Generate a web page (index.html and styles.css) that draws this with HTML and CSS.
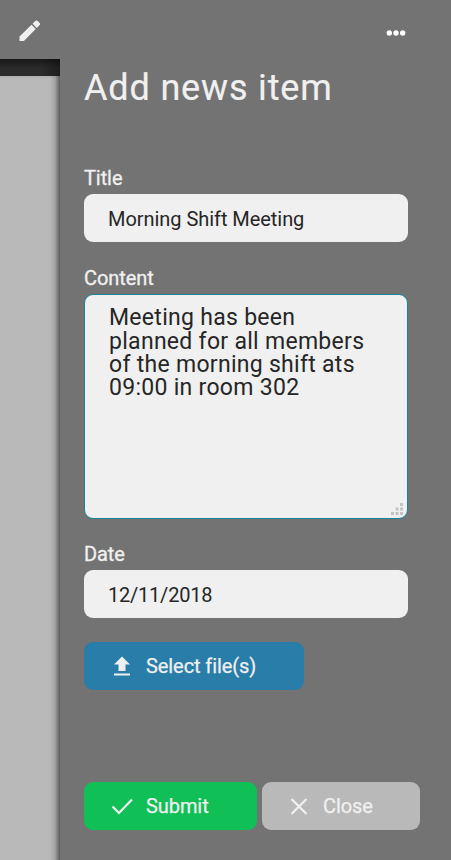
FILE: index.html
```html
<!DOCTYPE html>
<html lang="en">
<head>
<meta charset="utf-8">
<title>Add news item</title>
<link rel="stylesheet" href="styles.css">
</head>
<body>
<div class="app">
  <aside class="rail">
    <div class="rail-top">
      <svg class="pencil" viewBox="0 0 22 22"><path d="M0 17.2V22h4.6L17 9.4 12.6 5zM13.7 3.9l4.4 4.4 3-3q1.100-1 0-2.100L18.800.900q-1-1-2.100 0z"/></svg>
    </div>
    <div class="rail-bar"></div>
    <div class="rail-body"></div>
  </aside>
  <main class="panel">
    <div class="more">
      <svg width="20" height="6" viewBox="0 0 20 6"><circle cx="3.300" cy="3" r="2.700"/><circle cx="10" cy="3" r="2.700"/><circle cx="16.700" cy="3" r="2.700"/></svg>
    </div>
    <h1><span>Add news item</span></h1>
    <form class="form">
      <label>Title</label>
      <div class="input title-text">Morning Shift Meeting</div>
      <label>Content</label>
      <div class="area">Meeting has been<br>planned for all members<br>of the morning shift ats<br>09:00 in room 302
        <svg class="grip" width="13" height="12" viewBox="0 0 13 12"><path d="M10 0h3v3h-3zM5.500 4.500h3v3h-3zM10 4.500h3v3h-3zM1 9h3v3h-3zM5.500 9h3v3h-3zM10 9h3v3h-3z"/></svg>
      </div>
      <label>Date</label>
      <div class="input date-text">12/11/2018</div>
      <div class="button select">
        <svg class="icon" viewBox="0 0 22 22"><path d="M11 1.500 3 9.500H7.500V16H14.500V9.500H19zM3 18.500h16v2H3z"/></svg>
        <span>Select file(s)</span>
      </div>
      <div class="actions">
        <div class="button submit">
          <svg class="icon line" viewBox="0 0 22 22"><path d="M1.500 11.500 8 18 21 4.500"/></svg>
          <span>Submit</span>
        </div>
        <div class="button close">
          <svg class="icon line" viewBox="0 0 22 22"><path d="M3.500 4 18.500 19M18.500 4 3.500 19"/></svg>
          <span>Close</span>
        </div>
      </div>
    </form>
  </main>
</div>
</body>
</html>
```

FILE: styles.css
```css
* { box-sizing: border-box; }
body { margin: 0; font-family: Roboto, "Liberation Sans", sans-serif; background: #737373; }
.app { display: flex; width: 451px; height: 860px; overflow: hidden; }
.rail { flex: 0 0 60px; display: flex; flex-direction: column; }
.rail-top { height: 59px; background: #737373; padding: 20px 0 0 19px; }
.pencil { display: block; width: 22px; height: 21px; fill: #f0f0f0; }
.rail-bar { height: 17px; background: linear-gradient(90deg, transparent 40px, rgba(0,0,0,.3) 60px), linear-gradient(#181818, #2b2b2b 9px); }
.rail-body { flex: 1; background: linear-gradient(90deg, transparent 50px, rgba(0,0,0,.12) 55px, rgba(0,0,0,.5) 60px), linear-gradient(#b0b0b0, #b9b9b9 4px); }
.panel { flex: 1; padding: 0 31px 0 24px; background: #737373; color: #f0f0f0; }
.more { display: flex; height: 65px; padding: 29.500px 0 0 302px; }
.more svg { fill: #fff; }
h1 { height: 101px; margin: 0; font-size: 36px; line-height: 46px; font-weight: 400; letter-spacing: .840px; white-space: nowrap; -webkit-text-stroke: .200px; }
.form { display: flex; flex-direction: column; width: 324px; }
label { height: 28px; font-size: 20px; line-height: 24px; letter-spacing: -.080px; -webkit-text-stroke: .300px; }
.input { height: 48px; padding-left: 24px; margin-bottom: 24px; border-radius: 9px; background: #f0f0f0; color: #262626; font-size: 20px; line-height: 50px; letter-spacing: -.050px; }
.date-text { letter-spacing: -.220px; }
.area { position: relative; height: 225px; margin-bottom: 23px; padding: 11.300px 24px; border: 1px solid #15849b; border-radius: 9px; background: #f0f0f0; color: #262626; font-size: 23px; line-height: 23.300px; letter-spacing: .290px; white-space: nowrap; }
.grip { position: absolute; right: 4px; bottom: 3px; fill: #c3c3c3; }
.button { display: flex; align-items: center; height: 48px; padding-left: 27px; border-radius: 9px; font-size: 20px; line-height: 24px; letter-spacing: -.080px; -webkit-text-stroke: .250px; }
.icon { width: 22px; height: 22px; margin-right: 13px; fill: #f0f0f0; }
.line { fill: none; stroke: #f0f0f0; stroke-width: 2.200; }
.select { width: 220px; background: #287da9; }
.actions { display: flex; gap: 5px; width: 336px; margin-top: 92px; }
.submit { width: 173px; background: #10bf56; }
.close { width: 158px; background: #b9b9b9; padding-left: 26px; }
```
